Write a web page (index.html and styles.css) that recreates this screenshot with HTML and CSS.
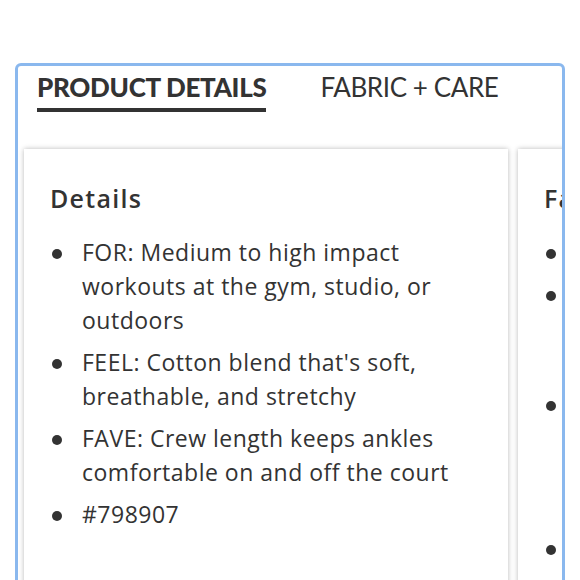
FILE: index.html
```html
<!DOCTYPE html>
<html lang="en">
<head>
<meta charset="utf-8">
<title>Product details</title>
<link rel="stylesheet" href="styles.css">
</head>
<body>
<div class="panel">
  <div class="tabs">
    <div class="tab active">PRODUCT DETAILS</div>
    <div class="tab">FABRIC + CARE</div>
  </div>
  <div class="cards">
    <section class="card">
      <h2>Details</h2>
      <ul>
        <li><span>FOR: Medium to high impact workouts at the gym, studio, or outdoors</span></li>
        <li><span>FEEL: Cotton blend that's soft, breathable, and stretchy</span></li>
        <li><span>FAVE: Crew length keeps ankles comfortable on and off the court</span></li>
        <li><span>#798907</span></li>
      </ul>
    </section>
    <section class="card">
      <h2>Fabric</h2>
      <ul>
        <li><span>Machine wash cold</span></li>
        <li><span>Wash with like colors, inside out, and do not use fabric softener or bleach</span></li>
        <li><span>Tumble dry low or lay flat to dry to help keep the fit and feel of your socks looking like new for many, many wears</span></li>
        <li><span>Imported</span></li>
      </ul>
    </section>
  </div>
</div>
</body>
</html>
```
FILE: styles.css
```css
body {
  margin: 0;
  background: #fff;
  color: #333;
  font-family: "Open Sans", Lato, sans-serif;
}

.panel {
  margin: 63px 0 0 15px;
  width: 544px;
  height: 560px;
  border: 3px solid #8ab8ee;
  border-radius: 6px 6px 0 0;
  overflow: hidden;
}

.tabs {
  display: flex;
  align-items: flex-start;
  gap: 54px;
  padding: 6px 0 0 19px;
}

.tab {
  font-family: Lato, sans-serif;
  font-size: 26px;
  line-height: 30px;
  padding-bottom: 6px;
  letter-spacing: -0.4px;
  white-space: nowrap;
}

.tab.active {
  font-weight: 900;
  letter-spacing: -0.3px;
  border-bottom: 4px solid #333;
}

.cards {
  display: flex;
  gap: 10px;
  padding: 37px 0 0 6px;
}

.card {
  flex: 0 0 484px;
  box-sizing: border-box;
  height: 500px;
  padding: 34px 26px 0;
  background: #fff;
  box-shadow: 0 0 5px rgba(0, 0, 0, 0.28);
}

.card h2 {
  margin: 0;
  font-size: 25px;
  line-height: 30px;
  font-weight: 600;
  letter-spacing: 1.3px;
}

.card ul {
  margin: 22px 0 0;
  padding: 0;
  list-style: none;
}

.card li {
  display: flex;
  font-size: 23px;
  line-height: 34px;
  letter-spacing: 0.5px;
  margin-bottom: 8px;
}

.card li::before {
  content: "";
  flex: 0 0 10px;
  height: 10px;
  margin: 14px 20px 0 2px;
  border-radius: 50%;
  background: #333;
}
```
